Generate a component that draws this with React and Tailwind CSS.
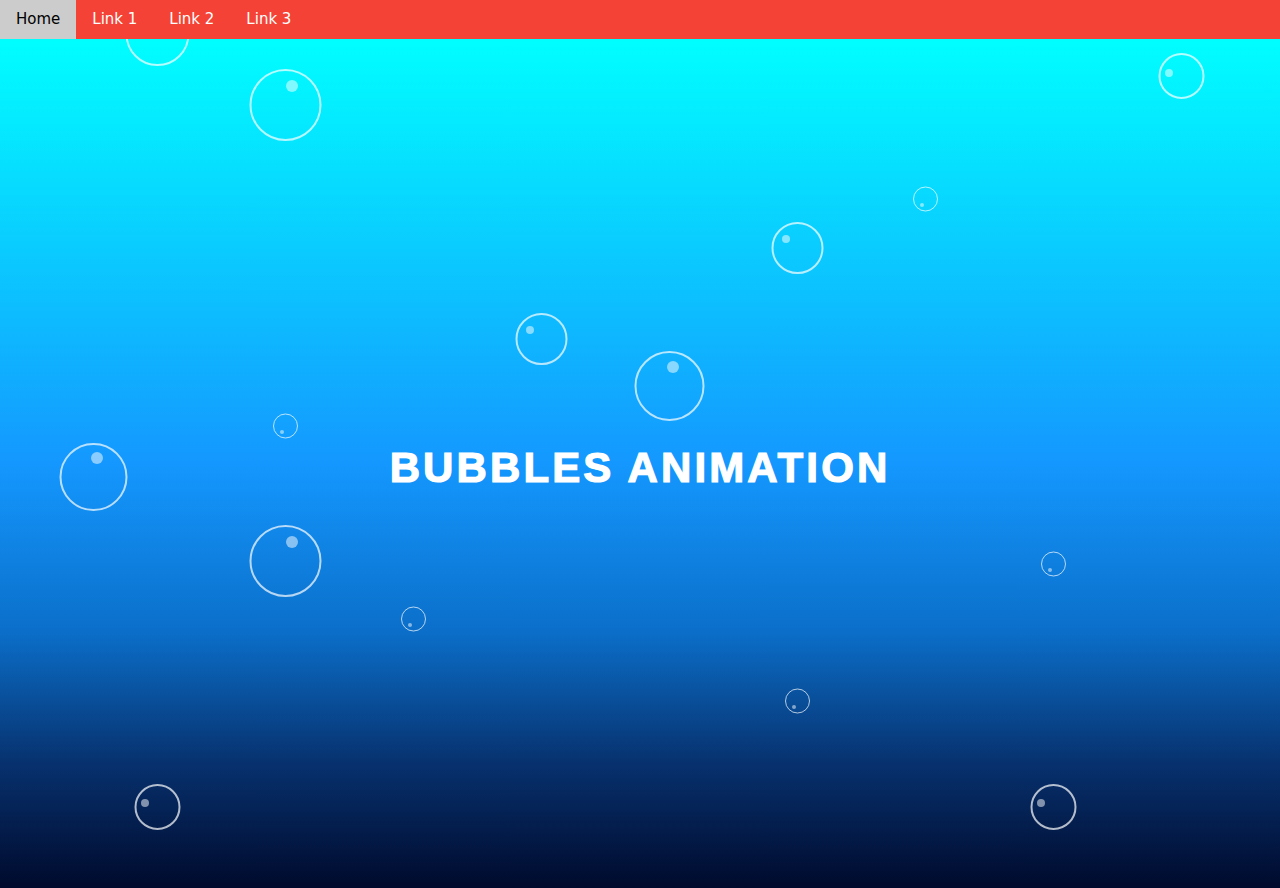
import React from 'react';

const LINKS = ['Home', 'Link 1', 'Link 2', 'Link 3'];

// x, y, r, highlight x, highlight y, highlight r
const BUBBLES = [
    [157.5, 34, 31, 164, 15, 5],
    [285.5, 105, 35, 292, 86, 6],
    [1181.5, 76, 22, 1169, 73, 4],
    [925.5, 199, 12, 922, 205, 2],
    [797.5, 248, 25, 786, 239, 4],
    [541.5, 339, 25, 530, 330, 4],
    [669.5, 386, 34, 673, 367, 6],
    [285.5, 426, 12, 282, 432, 2],
    [93.5, 477, 33, 97, 458, 6],
    [285.5, 561, 35, 292, 542, 6],
    [1053.5, 564, 12, 1050, 570, 2],
    [413.5, 619, 12, 410, 625, 2],
    [797.5, 701, 12, 794, 707, 2],
    [157.5, 807, 22, 145, 803, 4],
    [1053.5, 807, 22, 1041, 803, 4],
];

const Bubbles = () => (
    <svg className="absolute inset-0 pointer-events-none" width="1280" height="888" viewBox="0 0 1280 888">
        {BUBBLES.map(([x, y, r, hx, hy, hr], i) => (
            <g key={i}>
                <circle cx={x} cy={y} r={r} fill="none" stroke="rgba(255,255,255,0.7)" strokeWidth={r > 15 ? 2 : 1} />
                <circle cx={hx} cy={hy} r={hr} fill="rgba(255,255,255,0.5)" />
            </g>
        ))}
    </svg>
);

const App = () => {
    return (
        <div className="relative w-full h-[888px] overflow-hidden flex flex-col bg-[linear-gradient(to_bottom,#00ffff_4%,#1498ff_52%,#0b6fca_71%,#07316e_86%,#000a2c_100%)]">
            <Bubbles />

            {/* Nav */}
            <nav className="relative z-10 flex h-[39px] bg-[#f44336] font-['DejaVu_Sans',Verdana,sans-serif] text-[15px]">
                {LINKS.map((l, i) => (
                    <a
                        key={l}
                        href="#"
                        className={
                            i === 0
                                ? 'flex items-center px-4 bg-[#cccccc] text-black'
                                : 'flex items-center px-4 text-white'
                        }
                    >
                        {l}
                    </a>
                ))}
            </nav>

            <main className="relative flex-1 flex items-center justify-center pt-[8px]">
                <h1 className="font-['Liberation_Sans',Arial,sans-serif] font-bold text-[42px] text-white tracking-[3.1px] [-webkit-text-stroke:1.2px_white]">
                    BUBBLES ANIMATION
                </h1>
            </main>
        </div>
    );
};

export default App;
